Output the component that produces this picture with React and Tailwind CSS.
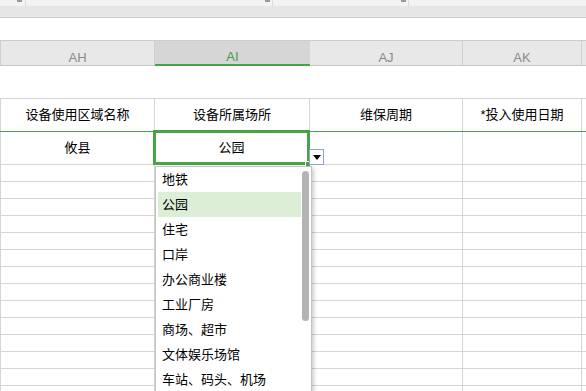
import React from 'react';

const COLS = [
  { key: 'AH', w: 'w-[155px]' },
  { key: 'AI', w: 'w-[155px]' },
  { key: 'AJ', w: 'w-[153px]' },
  { key: 'AK', w: 'w-[119px]' },
];

const OPTIONS = ['地铁', '公园', '住宅', '口岸', '办公商业楼', '工业厂房', '商场、超市', '文体娱乐场馆', '车站、码头、机场'];

function Row({ h, cells = [], border = 'border-[#d6d6d6]' }) {
  return (
    <div className={`flex ${h} border-b ${border}`}>
      {COLS.map((c, i) => (
        <div
          key={c.key}
          className={`${c.w} shrink-0 border-r border-[#d6d6d6] flex items-center justify-center text-[13px] text-black ${i === 0 ? 'border-l' : ''}`}
        >
          {cells[i]}
        </div>
      ))}
      <div className="flex-1" />
    </div>
  );
}

export default function App() {
  return (
    <div className="relative w-[586px] h-[391px] overflow-hidden bg-white font-['Liberation_Sans','Noto_Sans_CJK_SC',sans-serif]">
      {/* toolbar remnant */}
      <div className="h-[6px] bg-[#f3f3f3] flex shadow-[0_1px_2px_rgba(0,0,0,0.08)]">
        <div className="ml-[17px] w-[5px] h-[2px] bg-[#9a9a9a]" />
        <div className="ml-[3px] w-px h-full bg-[#dcdcdc]" />
        <div className="ml-[239px] w-[5px] h-[2px] bg-[#9a9a9a]" />
        <div className="ml-[2px] w-px h-full bg-[#dcdcdc]" />
        <div className="ml-[128px] w-[5px] h-[2px] bg-[#9a9a9a]" />
        <div className="ml-[2px] w-px h-full bg-[#dcdcdc]" />
      </div>
      <div className="h-[12px] bg-[#e6e6e6] border-b border-[#cdcdcd]" />
      <div className="h-[23px] bg-white border-b border-[#cdcdcd]" />

      {/* column headers */}
      <div className="flex h-[25px] bg-[#e8e8e8] border-b border-[#c6c6c6]">
        {COLS.map((c, i) => (
          <div
            key={c.key}
            className={`${c.w} shrink-0 flex items-end justify-center pb-[1px] text-[13px] leading-none ${
              c.key === 'AI'
                ? 'bg-[#d6d6d6] text-[#3f9f3f] border-b-2 border-[#46a346] -mb-px'
                : 'text-[#8a8a8a] border-r border-[#cfcfcf]'
            } ${i === 0 ? 'border-l' : ''}`}
          >
            {c.key}
          </div>
        ))}
        <div className="flex-1" />
      </div>

      <div className="h-[32px]" />

      {/* sheet */}
      <div className="border-t border-[#d6d6d6]">
        <Row h="h-[33px]" border="border-[#4a9f4a]" cells={['设备使用区域名称', '设备所属场所', '维保周期', '*投入使用日期']} />
        <Row h="h-[33px]" cells={['攸县', '', '', '']} />
        {Array.from({ length: 14 }).map((_, i) => (
          <Row key={i} h="h-[17px]" />
        ))}
      </div>

      {/* selected cell */}
      <div className="absolute left-[153px] top-[130px] w-[157px] h-[35px] border-[3px] border-[#46a346] flex items-center justify-center text-[13px] text-black">
        公园
      </div>
      <div className="absolute left-[305px] top-[161px] w-[6px] h-[6px] bg-[#46a346] border border-white" />

      {/* dropdown button */}
      <div className="absolute left-[309px] top-[149px] w-[15px] h-[16px] bg-white border border-[#8ea4c2] flex items-center justify-center">
        <svg width="8" height="5" viewBox="0 0 8 5">
          <path d="M0 0H8L4 5Z" fill="#000" />
        </svg>
      </div>

      {/* dropdown list */}
      <div className="absolute left-[155px] top-[166px] w-[157px] h-[240px] bg-white border border-[#c4c4c4] shadow-[2px_2px_4px_rgba(0,0,0,0.2)]">
        <div className="flex flex-col pl-[2px] pr-[10px]">
          {OPTIONS.map((o) => (
            <div
              key={o}
              className={`h-[25px] flex items-center pl-[4px] text-[13px] text-black ${o === '公园' ? 'bg-[#ddeed7]' : ''}`}
            >
              {o}
            </div>
          ))}
        </div>
        <div className="absolute right-[2px] top-[4px] w-[7px] h-[150px] rounded-full bg-[#b4b4b4]" />
      </div>
    </div>
  );
}
